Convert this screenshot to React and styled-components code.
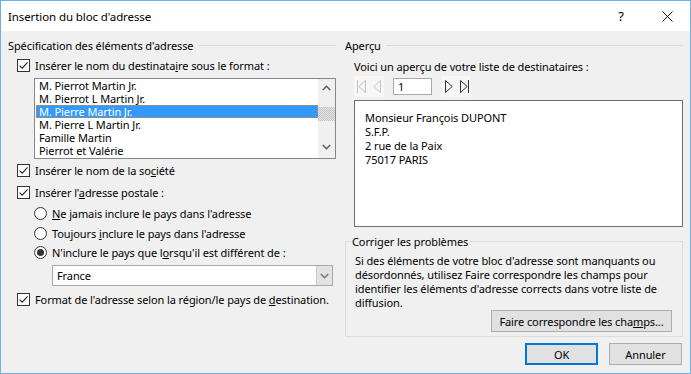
import styled, { createGlobalStyle } from "styled-components";

const Global = createGlobalStyle`
  body {
    margin: 0;
    background: #ffffff;
    font-family: "Noto Sans", "Open Sans", sans-serif;
    font-size: 11px;
    letter-spacing: -0.1px;
    color: #000;
  }
`;

const Window = styled.div`
  width: 691px;
  height: 374px;
  box-sizing: border-box;
  border: 1px solid #6cb2e8;
  background: #f0f0f0;
  display: flex;
  flex-direction: column;
  overflow: hidden;
`;

const TitleBar = styled.div`
  height: 30px;
  flex: none;
  background: #fff;
  display: flex;
  align-items: center;
  padding-left: 7px;
`;

const Title = styled.div`
  flex: 1;
  font-size: 11.5px;
`;

const TitleButton = styled.div`
  width: 46px;
  height: 30px;
  display: flex;
  align-items: center;
  justify-content: center;
  font-size: 13px;
`;

const Body = styled.div`
  display: grid;
  grid-template-columns: 328px 338px;
  column-gap: 9px;
  padding: 7px 7px 0 7px;
`;

const Column = styled.div`
  display: flex;
  flex-direction: column;
  align-items: stretch;
  min-width: 0;
`;

const SectionHeader = styled.div`
  display: flex;
  align-items: center;
  gap: 5px;
  height: 15px;
  line-height: 15px;
  white-space: nowrap;

  &::after {
    content: "";
    flex: 1;
    height: 1px;
    background: #dadada;
  }
`;

const Row = styled.label`
  display: flex;
  align-items: center;
  gap: 5px;
  height: 15px;
  line-height: 15px;
  white-space: nowrap;
  margin-top: ${({ $mt }) => $mt || 0}px;
  margin-left: ${({ $ml }) => $ml || 9}px;
`;

const Box = styled.span`
  width: 13px;
  height: 13px;
  box-sizing: border-box;
  border: 1px solid #333;
  background: #fff;
  display: flex;
  align-items: center;
  justify-content: center;
  flex: none;
`;

const Radio = styled.span`
  width: 13px;
  height: 13px;
  box-sizing: border-box;
  border: 1px solid #333;
  border-radius: 50%;
  background: #fff;
  display: flex;
  align-items: center;
  justify-content: center;
  flex: none;

  &::after {
    content: "";
    display: ${({ $on }) => ($on ? "block" : "none")};
    width: 7px;
    height: 7px;
    border-radius: 50%;
    background: #333;
  }
`;

const ListBox = styled.div`
  margin: 5px 0 0 26px;
  width: 302px;
  height: 81px;
  box-sizing: border-box;
  border: 1px solid #828790;
  background: #fff;
  display: flex;
`;

const Items = styled.div`
  flex: 1;
  display: flex;
  flex-direction: column;
  padding-left: 1px;
`;

const Item = styled.div`
  flex: none;
  height: 13px;
  line-height: 13px;
  padding-left: 3px;
  white-space: nowrap;
  color: ${({ $sel }) => ($sel ? "#fff" : "#000")};
  background: ${({ $sel }) => ($sel ? "#3399ff" : "transparent")};
  outline: ${({ $sel }) => ($sel ? "1px dotted #e08a1e" : "none")};
  outline-offset: -1px;
`;

const ScrollBar = styled.div`
  width: 17px;
  background: #f0f0f0;
  display: flex;
  flex-direction: column;
  align-items: center;
`;

const ScrollArrow = styled.div`
  height: 17px;
  width: 17px;
  display: flex;
  align-items: center;
  justify-content: center;
  margin-top: ${({ $mt }) => $mt || 0}px;
`;

const Thumb = styled.div`
  width: 17px;
  height: 14px;
  margin-top: 11px;
  background: repeating-conic-gradient(#c4c4c4 0 25%, #e6e6e6 0 50%) 0 0 / 2px 2px;
`;

const Combo = styled.div`
  margin: 5px 0 0 44px;
  width: 281px;
  height: 21px;
  box-sizing: border-box;
  border: 1px solid #a9a9a9;
  background: #fff;
  display: flex;
  align-items: center;
`;

const ComboText = styled.div`
  flex: 1;
  padding-left: 4px;
`;

const ComboButton = styled.div`
  width: 15px;
  height: 19px;
  background: #e3e3e3;
  border-left: 1px solid #c8c8c8;
  display: flex;
  align-items: center;
  justify-content: center;
`;

const Caption = styled.div`
  margin: 6px 0 0 9px;
  height: 15px;
  line-height: 15px;
  white-space: nowrap;
`;

const NavRow = styled.div`
  margin: 2px 0 0 9px;
  height: 21px;
  display: flex;
  align-items: center;
`;

const NavPair = styled.div`
  display: flex;
  height: 21px;
  background: #f7f7f7;
`;

const NavButton = styled.div`
  width: 15px;
  height: 21px;
  display: flex;
  align-items: center;
  justify-content: center;
`;

const NumberInput = styled.div`
  width: 39px;
  height: 17px;
  box-sizing: border-box;
  border: 1px solid #a9a9a9;
  background: #fff;
  margin: 0 9px;
  padding-left: 4px;
  line-height: 15px;
`;

const Preview = styled.div`
  margin: 3px 0 0 9px;
  height: 127px;
  box-sizing: border-box;
  border: 1px solid #6e6e6e;
  background: #fff;
  padding: 10px 0 0 10px;
  line-height: 14px;
  white-space: pre;
`;

const Group = styled.fieldset`
  margin: 7px 0 0 0;
  padding: 0 9px 4px 9px;
  border: 1px solid #dcdcdc;
  display: flex;
  flex-direction: column;
  min-width: 0;
`;

const Legend = styled.legend`
  margin-left: -5px;
  padding: 0 2px;
  line-height: 15px;
`;

const Paragraph = styled.p`
  margin: 5px 0 0 0;
  line-height: 14px;
  white-space: nowrap;
`;

const Button = styled.button`
  font: inherit;
  letter-spacing: inherit;
  color: #000;
  height: 22px;
  width: ${({ $w }) => $w}px;
  box-sizing: border-box;
  background: #e1e1e1;
  border: ${({ $def }) => ($def ? "2px solid #0078d7" : "1px solid #adadad")};
  padding: 0;
  white-space: nowrap;
`;

const ButtonRight = styled.div`
  display: flex;
  justify-content: flex-end;
  gap: 11px;
  margin-top: ${({ $mt }) => $mt || 0}px;
  margin-right: ${({ $mr }) => $mr || 0}px;
`;

const Check = () => (
  <svg width="11" height="11" viewBox="0 0 11 11">
    <path d="M1.6 5.6 L4.2 8.2 L9.6 2.4" fill="none" stroke="#222" strokeWidth="1.1" />
  </svg>
);

const Chevron = ({ up, color = "#606060" }) => (
  <svg width="9" height="6" viewBox="0 0 9 6">
    <path
      d={up ? "M0.8 5 L4.5 1.3 L8.2 5" : "M0.8 1 L4.5 4.7 L8.2 1"}
      fill="none"
      stroke={color}
      strokeWidth="1.6"
    />
  </svg>
);

const Tri = ({ dir, bar, color }) => (
  <svg width="10" height="13" viewBox="0 0 10 13">
    {dir === "left" ? (
      <path d="M8.5 0.5 L1.8 6.5 L8.5 12.5 Z" fill="none" stroke={color} />
    ) : (
      <path d="M1.5 0.5 L8.2 6.5 L1.5 12.5 Z" fill="none" stroke={color} />
    )}
    {bar && dir === "left" && <path d="M0.5 0 V13" stroke={color} />}
    {bar && dir === "right" && <path d="M9.5 0 V13" stroke={color} />}
  </svg>
);

const CheckRow = ({ children, mt }) => (
  <Row $mt={mt}>
    <Box>
      <Check />
    </Box>
    <span>{children}</span>
  </Row>
);

const RadioRow = ({ children, mt, on }) => (
  <Row $mt={mt} $ml={26}>
    <Radio $on={on} />
    <span>{children}</span>
  </Row>
);

const names = [
  "M. Pierrot Martin Jr.",
  "M. Pierrot L Martin Jr.",
  "M. Pierre Martin Jr.",
  "M. Pierre L Martin Jr.",
  "Famille Martin",
  "Pierrot et Valérie",
];

export default function App() {
  return (
    <>
      <Global />
      <Window>
        <TitleBar>
          <Title>Insertion du bloc d'adresse</Title>
          <TitleButton>?</TitleButton>
          <TitleButton>
            <svg width="11" height="11" viewBox="0 0 11 11">
              <path d="M0.5 0.5 L10.5 10.5 M10.5 0.5 L0.5 10.5" stroke="#111" strokeWidth="1" />
            </svg>
          </TitleButton>
        </TitleBar>
        <Body>
          <Column>
            <SectionHeader>Spécification des éléments d'adresse</SectionHeader>
            <CheckRow mt={5}>
              Insérer le nom du destinata<u>i</u>re sous le format :
            </CheckRow>
            <ListBox>
              <Items>
                {names.map((n, i) => (
                  <Item key={n} $sel={i === 2}>
                    {n}
                  </Item>
                ))}
              </Items>
              <ScrollBar>
                <ScrollArrow>
                  <Chevron up />
                </ScrollArrow>
                <Thumb />
                <ScrollArrow $mt={17}>
                  <Chevron />
                </ScrollArrow>
              </ScrollBar>
            </ListBox>
            <CheckRow mt={4}>
              Insérer le nom de la so<u>c</u>iété
            </CheckRow>
            <CheckRow mt={7}>
              Insérer l'<u>a</u>dresse postale :
            </CheckRow>
            <RadioRow mt={6}>
              <u>N</u>e jamais inclure le pays dans l'adresse
            </RadioRow>
            <RadioRow mt={5}>
              Toujours <u>i</u>nclure le pays dans l'adresse
            </RadioRow>
            <RadioRow mt={4} on>
              N'inclure le pays que l<u>o</u>rsqu'il est différent de :
            </RadioRow>
            <Combo>
              <ComboText>France</ComboText>
              <ComboButton>
                <Chevron color="#777" />
              </ComboButton>
            </Combo>
            <CheckRow mt={6}>
              Format de l'adresse selon la région/le pays de <u>d</u>estination.
            </CheckRow>
          </Column>

          <Column>
            <SectionHeader>Aperçu</SectionHeader>
            <Caption>Voici un aperçu de votre liste de destinataires :</Caption>
            <NavRow>
              <NavPair>
                <NavButton>
                  <Tri dir="left" bar color="#c2c2c2" />
                </NavButton>
                <NavButton>
                  <Tri dir="left" color="#c2c2c2" />
                </NavButton>
              </NavPair>
              <NumberInput>1</NumberInput>
              <NavPair>
                <NavButton>
                  <Tri dir="right" color="#333" />
                </NavButton>
                <NavButton>
                  <Tri dir="right" bar color="#333" />
                </NavButton>
              </NavPair>
            </NavRow>
            <Preview>
              {"Monsieur François DUPONT\nS.F.P.\n2 rue de la Paix\n75017 PARIS"}
            </Preview>
            <Group>
              <Legend>Corriger les problèmes</Legend>
              <Paragraph>
                Si des éléments de votre bloc d'adresse sont manquants ou
                <br />
                désordonnés, utilisez Faire correspondre les champs pour
                <br />
                identifier les éléments d'adresse corrects dans votre liste de
                <br />
                diffusion.
              </Paragraph>
              <ButtonRight $mr={1}>
                <Button $w={181}>
                  Faire correspondre les cha<u>m</u>ps...
                </Button>
              </ButtonRight>
            </Group>
            <ButtonRight $mt={6} $mr={1}>
              <Button $w={73} $def>
                OK
              </Button>
              <Button $w={73}>Annuler</Button>
            </ButtonRight>
          </Column>
        </Body>
      </Window>
    </>
  );
}
